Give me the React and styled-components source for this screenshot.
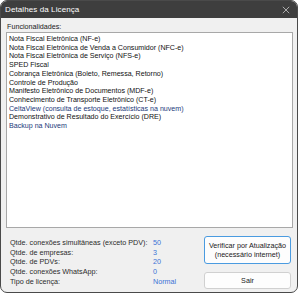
import React from "react";
import styled, { createGlobalStyle } from "styled-components";

const GlobalStyle = createGlobalStyle`
  html, body {
    margin: 0;
    padding: 0;
    background: #ffffff;
  }
  body {
    font-family: "Liberation Sans", Arial, sans-serif;
  }
`;

const features = [
  { text: "Nota Fiscal Eletrônica (NF-e)" },
  { text: "Nota Fiscal Eletrônica de Venda a Consumidor (NFC-e)" },
  { text: "Nota Fiscal Eletrônica de Serviço (NFS-e)" },
  { text: "SPED Fiscal" },
  { text: "Cobrança Eletrônica (Boleto, Remessa, Retorno)" },
  { text: "Controle de Produção" },
  { text: "Manifesto Eletrônico de Documentos (MDF-e)" },
  { text: "Conhecimento de Transporte Eletrônico (CT-e)" },
  { text: "CeltaView (consulta de estoque, estatísticas na nuvem)", link: true },
  { text: "Demonstrativo de Resultado do Exercício (DRE)" },
  { text: "Backup na Nuvem", link: true },
];

const stats = [
  ["Qtde. conexões simultâneas (exceto PDV):", "50"],
  ["Qtde. de empresas:", "3"],
  ["Qtde. de PDVs:", "20"],
  ["Qtde. conexões WhatsApp:", "0"],
  ["Tipo de licença:", "Normal"],
];

function App() {
  return (
    <>
      <GlobalStyle />
      <Window>
        <TitleBar>
          <Title>Detalhes da Licença</Title>
          <CloseIcon viewBox="0 0 10 10">
            <path d="M1 1 L9 9 M9 1 L1 9" stroke="#d8d8d8" strokeWidth="0.9" />
          </CloseIcon>
        </TitleBar>
        <Body>
          <SectionLabel>Funcionalidades:</SectionLabel>
          <FeatureList>
            {features.map((f) => (
              <FeatureItem key={f.text} $link={f.link}>
                {f.text}
              </FeatureItem>
            ))}
          </FeatureList>
          <Footer>
            <StatsGrid>
              {stats.map(([label, value]) => (
                <React.Fragment key={label}>
                  <StatLabel>{label}</StatLabel>
                  <StatValue>{value}</StatValue>
                </React.Fragment>
              ))}
            </StatsGrid>
            <Actions>
              <Button $focused>
                Verificar por Atualização
                <br />
                (necessário internet)
              </Button>
              <Button>Sair</Button>
            </Actions>
          </Footer>
        </Body>
      </Window>
    </>
  );
}

const Window = styled.div`
  width: 298px;
  height: 293px;
  box-sizing: border-box;
  display: flex;
  flex-direction: column;
  background-color: #f0f0f0;
  border: 1px solid #4a4a4a;
  border-radius: 7px;
  overflow: hidden;
`;

const TitleBar = styled.div`
  display: flex;
  align-items: center;
  justify-content: space-between;
  height: 17px;
  padding: 0 5px 0 4px;
  background-color: #3e3e3e;
  flex-shrink: 0;
`;

const Title = styled.div`
  color: #ffffff;
  font-size: 8px;
  letter-spacing: 0.1px;
`;

const CloseIcon = styled.svg`
  width: 8px;
  height: 8px;
  margin-right: 2px;
`;

const Body = styled.div`
  display: flex;
  flex-direction: column;
  flex: 1;
  padding: 3px 4px 5px 5px;
`;

const SectionLabel = styled.div`
  font-size: 7.2px;
  color: #1a1a1a;
  line-height: 11px;
  padding-left: 1px;
`;

const FeatureList = styled.div`
  height: 196px;
  box-sizing: border-box;
  background-color: #ffffff;
  border: 1px solid #a8a8a8;
  padding: 2px 2px;
`;

const FeatureItem = styled.div`
  font-size: 7.1px;
  line-height: 8.7px;
  color: ${(p) => (p.$link ? "#22397a" : "#111111")};
  white-space: nowrap;
`;

const Footer = styled.div`
  display: flex;
  justify-content: space-between;
  align-items: flex-start;
  padding: 8px 2px 0 4px;
`;

const StatsGrid = styled.div`
  display: grid;
  grid-template-columns: 143px auto;
  margin-top: 2px;
`;

const StatLabel = styled.div`
  font-size: 7.2px;
  line-height: 9.7px;
  color: #2b2b2b;
  white-space: nowrap;
`;

const StatValue = styled.div`
  font-size: 7.2px;
  line-height: 9.7px;
  color: #3a73d6;
`;

const Actions = styled.div`
  display: flex;
  flex-direction: column;
  gap: 8px;
  width: 87px;
`;

const Button = styled.div`
  box-sizing: border-box;
  background-color: #fdfdfd;
  border: 1px solid ${(p) => (p.$focused ? "#4a9be0" : "#d0d0d0")};
  border-radius: 3px;
  font-size: 7.2px;
  line-height: 9px;
  color: #1a1a1a;
  text-align: center;
  padding: ${(p) => (p.$focused ? "4px 2px" : "3px 2px")};
`;

export default App;
